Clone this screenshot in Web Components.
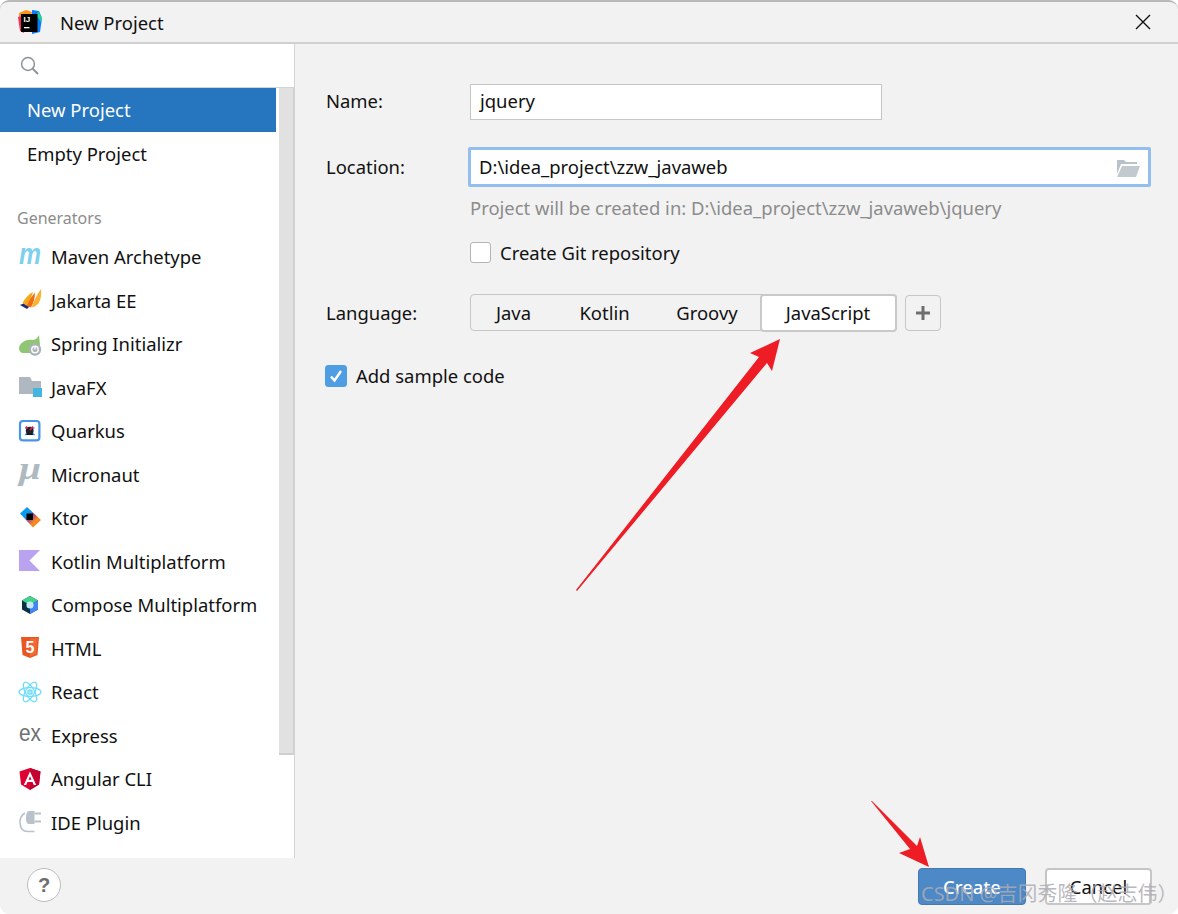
<!DOCTYPE html>
<html>
<head>
<meta charset="utf-8">
<title>New Project</title>
<style>
html, body { margin: 0; height: 100%; background: #fff; }
body { font: 18.45px "Noto Sans", "Noto Sans CJK SC", sans-serif; color: #000; overflow: hidden; }
</style>
</head>
<body>

<template id="icons">
  <svg data-name="maven" viewBox="0 0 22 22"><text x="0" y="18" font-family="Liberation Sans" font-size="30" font-weight="700" font-style="italic" fill="#7fd0ee" textLength="22" lengthAdjust="spacingAndGlyphs">m</text></svg>
  <svg data-name="jakarta" viewBox="0 0 22 22"><path d="M1 16 L7 13.5 L10 18 L8 20Z" fill="#1b2a78"/><path d="M3.5 14 C6 9 10 5 14 3 C12.5 8 10.5 13 8 17Z" fill="#f6a81c"/><path d="M8 17 C10 11 13 7 16 3.5 C16 9 14.5 14 12 18.5Z" fill="#ef6c12"/><path d="M12.5 18.5 C15 12 18 5 22 0 C22.5 6 22 11 19 15 C17.5 16.5 15 18 12.5 18.5Z" fill="#f9b233"/></svg>
  <svg data-name="spring" viewBox="0 0 22 22"><path d="M0 15 C1 9 8 6 13 7 C16 7 19 5 20 2 L21 12 L11 20 L4 20 C1.5 20 0 17.5 0 15Z" fill="#8fc573"/><circle cx="16" cy="16.5" r="6.2" fill="#aab2b8"/><circle cx="16" cy="16.5" r="3.2" fill="none" stroke="#fff" stroke-width="1.4"/><path d="M16 13 V16.5" stroke="#fff" stroke-width="1.4"/></svg>
  <svg data-name="javafx" viewBox="0 0 22 22"><path d="M0 1 H11 L13 5 H22 V18 H0Z" fill="#afb8c1"/><rect x="14" y="12" width="9" height="9" fill="#40b6e0"/></svg>
  <svg data-name="quarkus" viewBox="0 0 22 22"><rect x="1" y="1" width="19.4" height="19.4" rx="3" fill="none" stroke="#4695eb" stroke-width="2.2"/><path d="M6 8 L15.5 8 M6 15 L10.7 11 L15.5 15" stroke="#4695eb" stroke-width="1.4"/><circle cx="10.7" cy="10.7" r="3.9" fill="#20202a"/><path d="M14 6.5 L11 10 M7 6.5 L8.5 8.5" stroke="#e5254b" stroke-width="1.8"/></svg>
  <svg data-name="micronaut" viewBox="0 0 22 22"><text x="0" y="15.5" font-family="Liberation Serif" font-size="31" font-weight="700" font-style="italic" fill="#aebac2" textLength="22" lengthAdjust="spacingAndGlyphs">μ</text></svg>
  <svg data-name="ktor" viewBox="0 0 22 22">
    <defs><linearGradient id="kt" x1="0.1" y1="0.1" x2="0.9" y2="0.9"><stop offset="0.3" stop-color="#0a9bf0"/><stop offset="0.55" stop-color="#b9477d"/><stop offset="0.75" stop-color="#f48a20"/></linearGradient></defs>
    <path d="M8 0 L22 13 L14 20.5 L1 6.5Z" fill="url(#kt)"/><rect x="7.5" y="6.5" width="6.5" height="6.5" fill="#000"/></svg>
  <svg data-name="kotlin" viewBox="0 0 22 22"><path d="M0 0 H21 L10.5 10.5 L21 21 H0Z" fill="#b9a3f0"/></svg>
  <svg data-name="compose" viewBox="0 0 22 22"><path d="M11 2 L19 6.5 V15.5 L11 20 L3 15.5 V6.5Z" fill="#083042"/><path d="M11 2 L19 6.5 L11 11 L3 6.5Z" fill="#41d48a"/><path d="M19 6.5 V15.5 L11 20 V11Z" fill="#4285f4"/><circle cx="11" cy="11" r="3.6" fill="#c6e8f5"/></svg>
  <svg data-name="html" viewBox="0 0 22 22"><path d="M2 0 H20 L18.5 18 L11 21 L3.5 18Z" fill="#e9571f"/><path d="M11 1.5 H18.5 L17.3 17 L11 19.4Z" fill="#f0683a"/><text x="11" y="16" text-anchor="middle" font-family="Liberation Sans" font-size="16" font-weight="700" fill="#fff">5</text></svg>
  <svg data-name="react" viewBox="0 0 22 22" fill="none" stroke="#6fdcfb" stroke-width="1.3"><ellipse cx="11" cy="11" rx="11" ry="4.4"/><ellipse cx="11" cy="11" rx="11" ry="4.4" transform="rotate(60 11 11)"/><ellipse cx="11" cy="11" rx="11" ry="4.4" transform="rotate(120 11 11)"/><circle cx="11" cy="11" r="2.2" fill="#a8e9fb"/></svg>
  <svg data-name="express" viewBox="0 0 22 22"><text x="0" y="17" font-family="Liberation Sans" font-size="23" fill="#6e7072" textLength="22" lengthAdjust="spacingAndGlyphs">ex</text></svg>
  <svg data-name="angular" viewBox="0 0 22 22"><path d="M11 0 L21.5 3.5 L20 16.5 L11 22 L2 16.5 L.5 3.5Z" fill="#dd0031"/><path d="M11 0 L21.5 3.5 L20 16.5 L11 22Z" fill="#c3002f"/><path d="M11 3.5 L4.8 17 H7.2 L8.5 14 H13.5 L14.8 17 H17.2Z M9.5 11.8 L11 8.2 L12.5 11.8Z" fill="#fff" fill-rule="evenodd"/></svg>
  <svg data-name="plugin" viewBox="0 0 22 22" fill="none"><path d="M10 0 H15.5 V13 H10 C8 13 7 11 7 7 C7 3 8 0 10 0Z" fill="#b9c2ca"/><path d="M15.5 2.5 H22 M15.5 10.5 H22" stroke="#b9c2ca" stroke-width="2"/><path d="M6 2 C2.5 4 1 7 1 11 C1 17 4 20.5 9 20.5 H15.5" stroke="#b9c2ca" stroke-width="1.6"/></svg>
</template>

<script>
// shadow root helper, every element just sets its html here
function mount(el, html) {
    let root = el.attachShadow({ mode: 'open' });
    root.innerHTML = html;
    return root;
}

class NpWindow extends HTMLElement {
    constructor() {
        super();
        mount(this, `
        <style>
        :host {
            display: flex;
            flex-direction: column;
            box-sizing: border-box;
            width: 1178px;
            height: 914px;
            position: relative;
            background: #f2f2f2;
            border-top: 2px solid #b9b9b9;
            border-radius: 9px;
            overflow: hidden;
        }
        .body { display: flex; flex: 1; min-height: 0; }
        </style>
        <slot name="title"></slot>
        <div class="body">
            <slot name="side"></slot>
            <slot name="main"></slot>
        </div>
        <slot name="footer"></slot>
        <slot></slot>
        `);
    }
}

class NpTitlebar extends HTMLElement {
    constructor() {
        super();
        mount(this, `
        <style>
        :host {
            display: flex;
            align-items: center;
            height: 42px;
            box-sizing: border-box;
            border-bottom: 2px solid #d0d0d0;
            padding: 0 27px 0 18px;
        }
        svg.logo { width: 25px; height: 25px; margin-right: 17px; overflow: visible; }
        span { flex: 1; color: #111; }
        svg.close { width: 16px; height: 16px; }
        </style>
        <svg class="logo" viewBox="0 0 25 25">
            <path d="M1 3 L8 0 L14 2 L10 14 L1 12Z" fill="#ff9419"/>
            <path d="M0 7 L5 6 L6 23 L2 21Z" fill="#fe2857"/>
            <path d="M14 0 L21 1 L24 8 L22 22 L14 24Z" fill="#087cfa"/>
            <path d="M20 1 L24 8 L23 12 L19 6Z" fill="#21d789"/>
            <rect x="3" y="4" width="16.5" height="18" fill="#000"/>
            <text x="5.5" y="12" font-family="Liberation Sans" font-size="8" font-weight="700" fill="#fff">IJ</text>
            <rect x="6" y="17" width="5.5" height="1.3" fill="#fff"/>
        </svg>
        <span><slot></slot></span>
        <svg class="close" viewBox="0 0 16 16"><path d="M1 1 L15 15 M15 1 L1 15" stroke="#111" stroke-width="1.4" fill="none"/></svg>
        `);
    }
}

class NpSidebar extends HTMLElement {
    constructor() {
        super();
        mount(this, `
        <style>
        :host {
            display: flex;
            flex-direction: column;
            width: 295px;
            box-sizing: border-box;
            background: #fff;
            border-right: 1px solid #d4d4d4;
            position: relative;
        }
        .search {
            height: 44px;
            box-sizing: border-box;
            border-bottom: 1px solid #d4d4d4;
            padding: 12px 0 0 20px;
        }
        .search svg { width: 19px; height: 19px; display: block; }
        .list { display: flex; flex-direction: column; width: 276px; }
        .track {
            position: absolute;
            left: 279px;
            top: 44px;
            width: 15px;
            height: 667px;
            box-sizing: border-box;
            background: #e1e1e1;
            border-right: 1px solid #d0d0d0;
            border-bottom: 2px solid #cfcfcf;
        }
        </style>
        <div class="search">
            <svg viewBox="0 0 19 19" fill="none" stroke="#8a9299" stroke-width="1.5"><circle cx="8" cy="8" r="6.4"/><path d="M12.6 12.6 L18 18" stroke-width="2"/></svg>
        </div>
        <div class="list"><slot></slot></div>
        <div class="track"></div>
        `);
    }
}

class NpItem extends HTMLElement {
    // attributes are not there yet in the constructor when parsed, so build here
    connectedCallback() {
        if (this.shadowRoot) return;
        let icon = this.getAttribute('icon');
        let svg = '';
        if (icon) {
            let tpl = document.getElementById('icons');
            svg = tpl.content.querySelector(`[data-name="${icon}"]`).outerHTML;
        }
        mount(this, `
        <style>
        :host {
            display: flex;
            align-items: center;
            height: 43.5px;
            padding-left: 27px;
            white-space: nowrap;
            color: #111;
        }
        :host([icon]) { padding-left: 19px; }
        :host([selected]) { background: #2675bf; color: #fff; }
        svg { width: 22px; height: 22px; margin-right: 10px; flex: none; overflow: visible; }
        </style>
        ${svg}<slot></slot>
        `);
    }
}

class NpHeading extends HTMLElement {
    constructor() {
        super();
        mount(this, `
        <style>
        :host {
            display: flex;
            align-items: flex-end;
            height: 59.9px;
            box-sizing: border-box;
            padding: 0 0 5.5px 17px;
            font-size: 16px;
            color: #8c8c8c;
        }
        </style>
        <slot></slot>
        `);
    }
}

class NpMain extends HTMLElement {
    constructor() {
        super();
        mount(this, `
        <style>
        :host {
            display: flex;
            flex-direction: column;
            flex: 1;
            box-sizing: border-box;
            padding: 40px 27px 0 31px;
        }
        </style>
        <slot></slot>
        `);
    }
}

class NpRow extends HTMLElement {
    constructor() {
        super();
        mount(this, `
        <style>
        :host {
            display: flex;
            align-items: center;
            color: #111;
        }
        .label { width: 144px; flex: none; position: relative; top: var(--label-shift, 0); }
        .rest { flex: 1; display: flex; align-items: center; gap: 8px; min-width: 0; }
        </style>
        <span class="label"><slot name="label"></slot></span>
        <div class="rest"><slot></slot></div>
        `);
    }
}

class NpInput extends HTMLElement {
    connectedCallback() {
        if (this.shadowRoot) return;
        let folder = this.hasAttribute('browse') ? `
            <svg viewBox="0 0 24 18"><path d="M1 1 H8 L10 3 H21 V5 H5 L1 15Z" fill="#b9c2c9"/><path d="M6 7 H24 L20 18 H1Z" fill="#c2cad0"/></svg>` : '';
        mount(this, `
        <style>
        :host {
            display: flex;
            align-items: center;
            box-sizing: border-box;
            height: 36px;
            background: #fff;
            border: 1px solid #c6c6c6;
            padding: 0 9px 3px;
            color: #111;
        }
        :host([focused]) {
            height: 40px;
            margin: 0 0 0 -2px;
            border: 3px solid #93bfee;
            border-radius: 2px;
            padding: 0 8px 1px;
        }
        span { flex: 1; }
        svg { width: 24px; height: 18px; margin-top: 2px; }
        </style>
        <span><slot></slot></span>${folder}
        `);
    }
}

class NpCheck extends HTMLElement {
    connectedCallback() {
        if (this.shadowRoot) return;
        mount(this, `
        <style>
        :host {
            display: flex;
            align-items: center;
            gap: 9px;
            color: #111;
        }
        :host([checked]) { margin-left: -1px; }
        .box {
            width: 21px;
            height: 21px;
            box-sizing: border-box;
            background: #fff;
            border: 1px solid #b4b4b4;
            border-radius: 3px;
        }
        :host([checked]) .box { background: #4f9ee3; border-color: #4f9ee3; width: 22px; height: 22px; }
        svg { display: block; }
        </style>
        <div class="box">${this.hasAttribute('checked') ? '<svg viewBox="0 0 20 20"><path d="M5 10.5 L8.5 14.5 L15 5" fill="none" stroke="#fff" stroke-width="2.4"/></svg>' : ''}</div>
        <slot></slot>
        `);
    }
}

class NpSegments extends HTMLElement {
    constructor() {
        super();
        mount(this, `
        <style>
        :host {
            display: flex;
            box-sizing: border-box;
            height: 37px;
            width: 427px;
            border: 1.5px solid #c6c6c6;
            border-radius: 4px;
        }
        </style>
        <slot></slot>
        `);
    }
}

class NpSegment extends HTMLElement {
    constructor() {
        super();
        mount(this, `
        <style>
        :host {
            display: flex;
            align-items: center;
            justify-content: center;
            box-sizing: border-box;
            color: #111;
        }
        :host([selected]) {
            background: #fff;
            border: 2px solid #c9c9c9;
            border-radius: 4px;
            margin: -1.5px;
        }
        </style>
        <slot></slot>
        `);
    }
}

class NpPlus extends HTMLElement {
    constructor() {
        super();
        mount(this, `
        <style>
        :host {
            display: flex;
            align-items: center;
            justify-content: center;
            box-sizing: border-box;
            width: 36px;
            height: 36px;
            border: 1.5px solid #c6c6c6;
            border-radius: 4px;
        }
        svg { width: 16px; height: 16px; }
        </style>
        <svg viewBox="0 0 16 16"><path d="M8 1 V15 M1 8 H15" stroke="#6e6e6e" stroke-width="3" fill="none"/></svg>
        `);
    }
}

class NpFooter extends HTMLElement {
    constructor() {
        super();
        mount(this, `
        <style>
        :host {
            display: flex;
            align-items: flex-start;
            box-sizing: border-box;
            height: 56px;
            padding: 10px 26px 0 27px;
        }
        .help {
            width: 34px;
            height: 34px;
            box-sizing: border-box;
            background: #fff;
            border: 1px solid #bdbdbd;
            border-radius: 50%;
            display: flex;
            align-items: center;
            justify-content: center;
            font: 700 20px "Liberation Sans", sans-serif;
            color: #6e6e6e;
        }
        .space { flex: 1; }
        .btns { display: flex; gap: 19px; }
        </style>
        <div class="help">?</div>
        <div class="space"></div>
        <div class="btns"><slot></slot></div>
        `);
    }
}

class NpButton extends HTMLElement {
    constructor() {
        super();
        mount(this, `
        <style>
        :host {
            display: flex;
            align-items: center;
            justify-content: center;
            box-sizing: border-box;
            width: 107px;
            height: 37px;
            background: #fff;
            border: 2px solid #c6c6c6;
            border-radius: 4px;
            color: #111;
        }
        :host([primary]) {
            width: 108px;
            background: #4d88c7;
            border: 1px solid #4379b5;
            color: #fff;
            font-weight: 500;
        }
        </style>
        <slot></slot>
        `);
    }
}

// red arrows and the watermark lie over the dialog
class NpOverlay extends HTMLElement {
    constructor() {
        super();
        mount(this, `
        <style>
        :host { position: absolute; left: 0; top: -2px; width: 1178px; height: 914px; pointer-events: none; }
        svg { position: absolute; left: 0; top: 0; }
        .mark {
            position: absolute;
            left: 921px;
            top: 878px;
            font: 20px "Noto Sans", "Noto Sans CJK SC", sans-serif;
            color: rgba(172,172,178,.85);
            white-space: nowrap;
        }
        </style>
        <svg width="1178" height="914">
            <polygon points="576,590 759,357 750,353 780,339 772,371 767,363 577,591" fill="#ee1c25"/>
            <polygon points="871,801 872,801 917,846 920,837 929,867 899,853 910,849" fill="#ee1c25"/>
        </svg>
        <div class="mark">CSDN @吉冈秀隆（赵志伟）</div>
        `);
    }
}

customElements.define('np-window', NpWindow);
customElements.define('np-titlebar', NpTitlebar);
customElements.define('np-sidebar', NpSidebar);
customElements.define('np-item', NpItem);
customElements.define('np-heading', NpHeading);
customElements.define('np-main', NpMain);
customElements.define('np-row', NpRow);
customElements.define('np-input', NpInput);
customElements.define('np-check', NpCheck);
customElements.define('np-segments', NpSegments);
customElements.define('np-segment', NpSegment);
customElements.define('np-plus', NpPlus);
customElements.define('np-footer', NpFooter);
customElements.define('np-button', NpButton);
customElements.define('np-overlay', NpOverlay);
</script>

<np-window>
    <np-titlebar slot="title">New Project</np-titlebar>
    <np-sidebar slot="side">
        <np-item selected>New Project</np-item>
        <np-item>Empty Project</np-item>
        <np-heading>Generators</np-heading>
        <np-item icon="maven">Maven Archetype</np-item>
        <np-item icon="jakarta">Jakarta EE</np-item>
        <np-item icon="spring">Spring Initializr</np-item>
        <np-item icon="javafx">JavaFX</np-item>
        <np-item icon="quarkus">Quarkus</np-item>
        <np-item icon="micronaut">Micronaut</np-item>
        <np-item icon="ktor">Ktor</np-item>
        <np-item icon="kotlin">Kotlin Multiplatform</np-item>
        <np-item icon="compose">Compose Multiplatform</np-item>
        <np-item icon="html">HTML</np-item>
        <np-item icon="react">React</np-item>
        <np-item icon="express">Express</np-item>
        <np-item icon="angular">Angular CLI</np-item>
        <np-item icon="plugin">IDE Plugin</np-item>
    </np-sidebar>
    <np-main slot="main">
        <np-row style="--label-shift:-2px">
            <span slot="label">Name:</span>
            <np-input style="width:412px">jquery</np-input>
        </np-row>
        <np-row style="margin-top:27px;--label-shift:-1px">
            <span slot="label">Location:</span>
            <np-input focused browse style="flex:1">D:\idea_project\zzw_javaweb</np-input>
        </np-row>
        <np-row style="margin-top:8px;height:24px">
            <span style="color:#8c8c8c">Project will be created in: D:\idea_project\zzw_javaweb\jquery</span>
        </np-row>
        <np-row style="margin-top:21px">
            <np-check>Create Git repository</np-check>
        </np-row>
        <np-row style="margin-top:29px">
            <span slot="label">Language:</span>
            <np-segments>
                <np-segment style="width:85px">Java</np-segment>
                <np-segment style="width:97px">Kotlin</np-segment>
                <np-segment style="width:108px">Groovy</np-segment>
                <np-segment selected style="width:137px">JavaScript</np-segment>
            </np-segments>
            <np-plus></np-plus>
        </np-row>
        <np-check checked style="margin-top:32px">Add sample code</np-check>
    </np-main>
    <np-footer slot="footer">
        <np-button primary>Create</np-button>
        <np-button>Cancel</np-button>
    </np-footer>
    <np-overlay></np-overlay>
</np-window>
</body>
</html>
